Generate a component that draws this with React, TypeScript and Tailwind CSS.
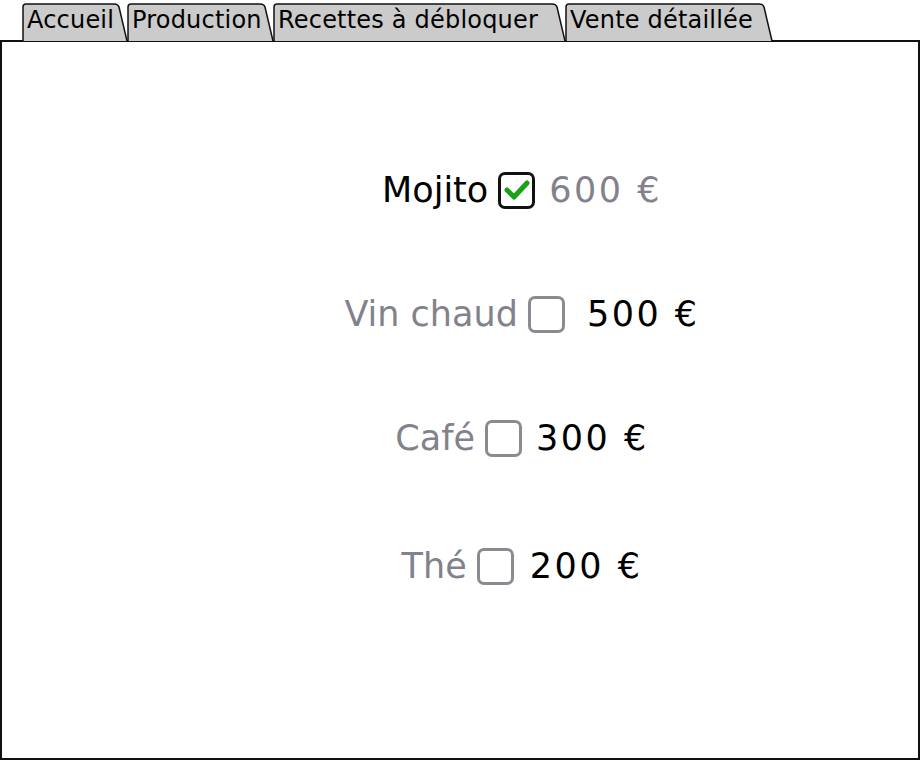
import React from "react";

const tabs = [
  { label: "Accueil", w: 106 },
  { label: "Production", w: 147 },
  { label: "Recettes à débloquer", w: 293 },
  { label: "Vente détaillée", w: 208 },
];

function Tab({ label, w }: { label: string; w: number }) {
  const h = 38;
  return (
    <div className="relative h-[38px] shrink-0 -mr-[1px]" style={{ width: w }}>
      <svg className="absolute inset-0" width={w} height={h} viewBox={`0 0 ${w} ${h}`}>
        <path
          d={`M1 ${h} L1 4 Q1 1 4 1 L${w - 14} 1 Q${w - 10} 1 ${w - 9} 4 L${w - 1} ${h}`}
          fill="#cbcbcb"
          stroke="#111"
          strokeWidth="1.5"
        />
      </svg>
      <span className="relative block pl-[5px] pt-[1px] text-[24px] tracking-[0.2px] leading-[32px] text-black whitespace-nowrap">
        {label}
      </span>
    </div>
  );
}

function Box({ checked }: { checked?: boolean }) {
  return (
    <div
      className={`w-[37px] h-[37px] rounded-[7px] border-[3px] flex items-center justify-center shrink-0 ${
        checked ? "border-[#111]" : "border-[#8a8a90]"
      }`}
    >
      {checked && (
        <svg width="26" height="22" viewBox="0 0 26 22">
          <path d="M3 11 L10 18 L23 4" fill="none" stroke="#17a317" strokeWidth="5" strokeLinecap="round" strokeLinejoin="round" />
        </svg>
      )}
    </div>
  );
}

const gray = "text-[#82828c]";
const price = "tracking-[2.5px]";

export default function App() {
  return (
    <div
      className="w-[921px] h-[761px] bg-white flex flex-col overflow-hidden"
      style={{ fontFamily: "'DejaVu Sans', 'Noto Sans', sans-serif" }}
    >
      <div className="h-[41px] pl-[22px] pt-[3px] flex items-end">
        {tabs.map((t) => (
          <Tab key={t.label} {...t} />
        ))}
      </div>
      <div className="flex-1 border-2 border-[#111] -mt-[1px] mr-[1px] mb-[1px] flex flex-col items-center pl-[124px] pt-[128px] text-[35px] leading-[40px]">
        <div className="h-[40px] flex items-center gap-[10px]">
          <span className="text-black">Mojito</span>
          <Box checked />
          <span className={`${gray} ${price} ml-[4px]`}>600 €</span>
        </div>
        <div className="h-[40px] mt-[84px] flex items-center gap-[10px]">
          <span className={gray}>Vin chaud</span>
          <Box />
          <span className={`text-black ${price} ml-[12px]`}>500 €</span>
        </div>
        <div className="h-[40px] mt-[84px] flex items-center gap-[10px]">
          <span className={gray}>Café</span>
          <Box />
          <span className={`text-black ${price} ml-[4px]`}>300 €</span>
        </div>
        <div className="h-[40px] mt-[88px] flex items-center gap-[10px]">
          <span className={gray}>Thé</span>
          <Box />
          <span className={`text-black ${price} ml-[6px]`}>200 €</span>
        </div>
      </div>
    </div>
  );
}
